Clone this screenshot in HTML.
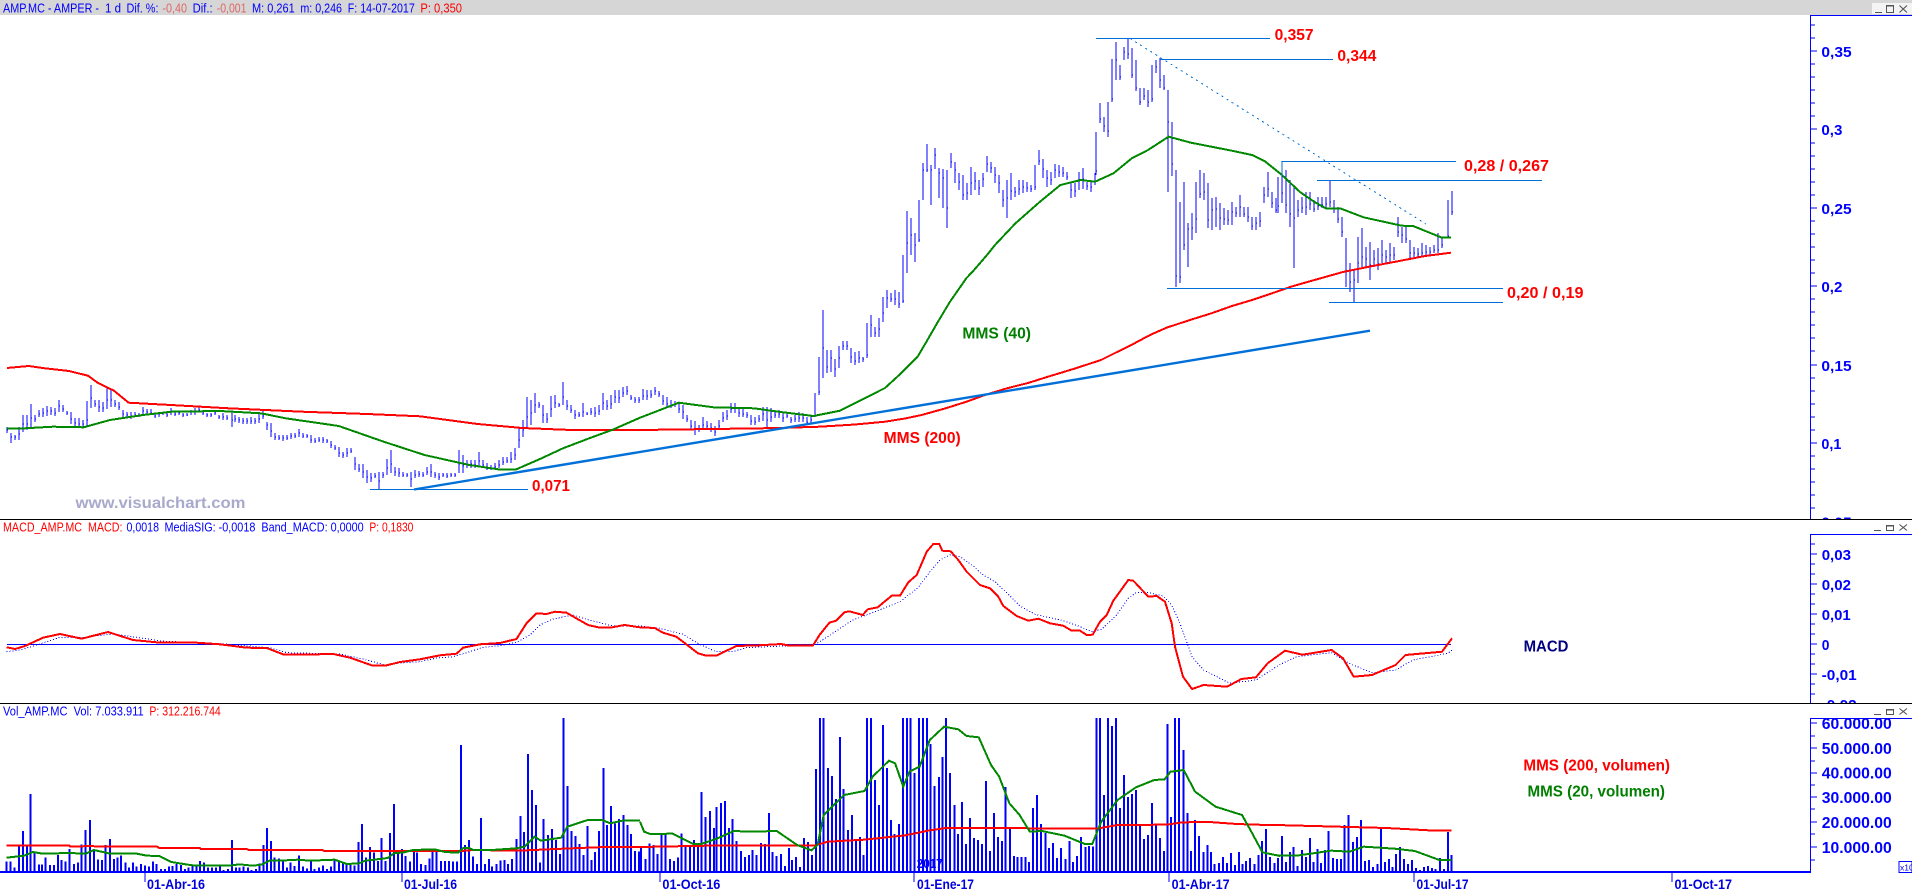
<!DOCTYPE html>
<html lang="es"><head><meta charset="utf-8"><title>AMP.MC - AMPER</title>
<style>
html,body{margin:0;padding:0;background:#fff;width:1912px;height:892px;overflow:hidden}
svg{display:block;position:absolute;left:0;top:0}
text{font-family:"Liberation Sans",Arial,sans-serif}
.t{font-size:13px}
.b{fill:#0000ff}.r{fill:#ff0000}.s{fill:#e06666}
.ax{font-size:15px;font-weight:700;fill:#0000ff}
.d{font-size:13.5px;font-weight:700;fill:#0000e0}
.an{font-size:16px;font-weight:700;fill:#ff0000}
.v *{vector-effect:non-scaling-stroke}
.c{shape-rendering:crispEdges;fill:none}
</style></head><body>
<svg width="1912" height="892" viewBox="0 0 1912 892" xmlns="http://www.w3.org/2000/svg">
<defs>
<clipPath id="p1"><rect x="1800" y="15" width="112" height="504"/></clipPath>
<clipPath id="p2"><rect x="1800" y="534" width="112" height="169"/></clipPath>
</defs>
<rect width="1912" height="892" fill="#fff"/>
<rect width="1912" height="15" fill="#d6d6d6"/>
<rect x="1872" y="3" width="40" height="11" fill="#f4f4f4"/>

<!-- title 1 -->
<g class="t">
<text class="b" x="3" y="12.5" textLength="96" lengthAdjust="spacingAndGlyphs">AMP.MC - AMPER -</text>
<text class="b" x="105" y="12.5" textLength="16" lengthAdjust="spacingAndGlyphs">1 d</text>
<text class="b" x="126.5" y="12.5" textLength="32" lengthAdjust="spacingAndGlyphs">Dif. %:</text>
<text class="s" x="162.4" y="12.5" textLength="24.6" lengthAdjust="spacingAndGlyphs">-0,40</text>
<text class="b" x="192.6" y="12.5" textLength="20" lengthAdjust="spacingAndGlyphs">Dif.:</text>
<text class="s" x="216.7" y="12.5" textLength="29.8" lengthAdjust="spacingAndGlyphs">-0,001</text>
<text class="b" x="252" y="12.5" textLength="42.7" lengthAdjust="spacingAndGlyphs">M: 0,261</text>
<text class="b" x="300.4" y="12.5" textLength="41.6" lengthAdjust="spacingAndGlyphs">m: 0,246</text>
<text class="b" x="347.8" y="12.5" textLength="67" lengthAdjust="spacingAndGlyphs">F: 14-07-2017</text>
<text class="r" x="420.4" y="12.5" textLength="41.6" lengthAdjust="spacingAndGlyphs">P: 0,350</text>
<!-- title 2 -->
<text class="r" x="3" y="531.5" textLength="119.5" lengthAdjust="spacingAndGlyphs" xml:space="preserve">MACD_AMP.MC  MACD:</text>
<text class="b" x="126.5" y="531.5" textLength="32.5" lengthAdjust="spacingAndGlyphs">0,0018</text>
<text class="b" x="164.5" y="531.5" textLength="199.2" lengthAdjust="spacingAndGlyphs" xml:space="preserve">MediaSIG: -0,0018  Band_MACD: 0,0000</text>
<text class="r" x="369.4" y="531.5" textLength="44" lengthAdjust="spacingAndGlyphs">P: 0,1830</text>
<!-- title 3 -->
<text class="b" x="3" y="715.5" textLength="140.7" lengthAdjust="spacingAndGlyphs" xml:space="preserve">Vol_AMP.MC  Vol: 7.033.911</text>
<text class="r" x="149.4" y="715.5" textLength="71.4" lengthAdjust="spacingAndGlyphs">P: 312.216.744</text>
</g>

<!-- separators -->
<rect x="0" y="519" width="1912" height="1" fill="#000"/>
<rect x="0" y="703" width="1912" height="1" fill="#000"/>

<!-- price bars -->
<path class="c" stroke="#0000ff" stroke-width="1" d="M7 427V433m0-3h1M11 433V443m0-6h1M15 435V440m0-3h1M19 427V440m0-6h1M23 415V432m0-8h1M27 415V430m0-6h1M31 404V428m0-10h1M35 415V422m0-3h1M39 410V417m0-3h1M43 408V417m0-4h1M47 406V416m0-5h1M51 407V415m0-4h1M55 408V416m0-3h1M59 400V412m0-6h1M63 405V412m0-3h1M67 411V415m0-2h1M71 412V424m0-5h1M75 418V427m0-4h1M79 418V427m0-3h1M83 420V428m0-4h1M87 401V427m0-7h1M91 385V408m0-10h1M95 400V407m0-3h1M99 400V412m0-5h1M103 402V412m0-4h1M107 388V409m0-9h1M111 390V407m0-7h1M115 400V407m0-3h1M119 402V410m0-3h1M123 410V417m0-3h1M127 412V417m0-2h1M131 412V419m0-3h1M135 412V417m0-2h1M139 413V417m0-2h1M143 407V415m0-4h1M147 409V415m0-3h1M151 409V415m0-2h1M155 413V418m0-2h1M159 412V417m0-3h1M163 412V415m0-2h1M167 413V417m0-2h1M171 408V415m0-3h1M175 412V416m0-2h1M179 412V415m0-2h1M183 413V417m0-2h1M187 413V416m0-1h1M191 410V415m0-3h1M195 408V415m0-3h1M199 407V412m0-2h1M203 410V415m0-2h1M207 413V417m0-2h1M211 413V417m0-2h1M215 410V415m0-2h1M219 415V419m0-2h1M223 413V420m0-3h1M227 415V420m0-2h1M232 411V427m0-7h1M235 415V422m0-3h1M239 417V423m0-3h1M243 418V424m0-3h1M247 418V424m0-3h1M251 417V424m0-3h1M255 418V424m0-3h1M259 413V423m0-4h1M263 411V419m0-3h1M267 422V430m0-5h1M271 423V437m0-6h1M275 433V440m0-3h1M279 435V440m0-2h1M283 435V441m0-3h1M287 435V440m0-2h1M291 433V439m0-3h1M295 433V438m0-2h1M299 429V437m0-4h1M303 433V438m0-2h1M307 434V438m0-2h1M311 435V443m0-3h1M315 438V443m0-2h1M319 437V442m0-2h1M323 437V443m0-3h1M327 439V443m0-2h1M331 441V448m0-3h1M335 445V450m0-2h1M339 447V457m0-4h1M343 452V458m0-3h1M347 448V457m0-4h1M351 448V453m0-2h1M355 457V470m0-6h1M359 464V472m0-3h1M363 464V478m0-6h1M367 470V483m0-6h1M371 473V482m0-4h1M375 473V478m0-2h1M379 472V489m0-8h1M383 472V478m0-3h1M387 459V475m0-7h1M391 450V473m0-9h1M395 467V476m0-4h1M399 468V477m0-4h1M403 472V477m0-2h1M407 473V477m0-2h1M411 472V487m0-8h1M415 470V478m0-3h1M419 471V477m0-3h1M423 472V477m0-2h1M427 467V475m0-3h1M431 464V477m0-5h1M435 472V478m0-3h1M439 473V480m0-3h1M443 473V477m0-2h1M447 473V478m0-2h1M451 473V477m0-2h1M455 473V477m0-2h1M459 450V473m0-9h1M463 455V473m0-7h1M467 460V468m0-3h1M471 460V468m0-4h1M475 460V468m0-3h1M479 452V467m0-6h1M483 460V468m0-3h1M487 463V470m0-3h1M491 465V470m0-2h1M495 463V470m0-3h1M499 460V468m0-3h1M503 457V465m0-3h1M507 457V463m0-2h1M511 452V463m0-4h1M515 448V460m0-5h1M519 428V448m0-8h1M523 420V437m0-7h1M527 397V427m0-10h1M531 400V425m0-12h1M535 393V413m0-8h1M539 402V408m0-3h1M543 405V423m0-8h1M547 413V423m0-4h1M551 396V417m0-8h1M555 395V408m0-5h1M559 403V407m0-2h1M563 382V405m0-8h1M567 400V410m0-4h1M571 405V413m0-3h1M575 410V419m0-4h1M579 412V417m0-2h1M583 403V417m0-5h1M587 412V415m0-1h1M591 408V415m0-3h1M595 407V417m0-4h1M599 405V415m0-4h1M603 393V410m0-7h1M607 400V410m0-4h1M611 395V409m0-5h1M615 390V403m0-6h1M619 390V403m0-5h1M623 387V397m0-4h1M627 386V395m0-4h1M631 395V400m0-2h1M635 397V403m0-3h1M639 397V403m0-3h1M643 389V400m0-4h1M647 390V400m0-4h1M651 390V398m0-3h1M655 387V395m0-4h1M659 391V397m0-3h1M663 395V405m0-4h1M667 397V408m0-4h1M671 400V408m0-3h1M675 401V407m0-3h1M679 403V413m0-4h1M683 405V419m0-7h1M687 415V422m0-3h1M691 420V430m0-4h1M695 421V435m0-6h1M699 425V432m0-3h1M703 417V430m0-5h1M707 421V430m0-4h1M711 423V432m0-4h1M715 426V436m0-4h1M719 420V430m0-4h1M723 412V422m0-4h1M727 410V420m0-4h1M731 403V413m0-4h1M735 403V413m0-5h1M739 407V417m0-4h1M743 408V417m0-3h1M747 412V418m0-3h1M751 415V425m0-4h1M755 417V425m0-3h1M759 415V422m0-3h1M763 407V421m0-7h1M767 407V427m0-7h1M771 408V422m0-5h1M775 412V418m0-3h1M779 410V418m0-4h1M783 412V422m0-4h1M787 412V418m0-2h1M791 417V423m0-3h1M795 415V422m0-3h1M799 412V422m0-4h1M803 413V422m0-4h1M807 417V425m0-3h1M811 415V423m0-3h1M815 393V417m0-2h1M819 357V395m0-3h1M823 310V378m0-30h1M827 350V373m0-6h1M831 350V372m0-14h1M835 359V377m0-8h1M839 346V368m0-10h1M843 341V350m0-4h1M847 341V350m0-4h1M851 348V363m0-6h1M855 352V365m0-4h1M859 351V363m0-5h1M863 357V362m0-3h1M867 323V358m0-3h1M871 315V337m0-12h1M875 327V337m0-4h1M879 318V337m0-8h1M883 297V322m0-9h1M887 290V308m0-10h1M891 293V302m0-3h1M895 290V305m0-6h1M899 292V308m0-4h1M903 255V303m0-2h1M907 211V273m0-30h1M911 218V255m0-20h1M915 233V262m0-17h1M919 200V242m0-2h1M923 163V200m0-30h1M927 144V172m0-2h1M931 165V205m0-35h1M935 148V169m0-14h1M939 168V198m0-25h1M943 169V208m0-30h1M947 170V228m0-20h1M951 153V168m0-6h1M955 162V183m0-13h1M959 173V190m0-8h1M963 175V200m0-5h1M967 183V200m0-7h1M971 167V195m0-12h1M975 172V190m0-9h1M979 180V195m0-7h1M983 173V187m0-8h1M987 156V172m0-8h1M991 162V173m0-5h1M995 167V183m0-8h1M999 175V193m0-10h1M1003 190V207m0-7h1M1007 180V218m0-20h1M1011 173V200m0-9h1M1015 187V197m0-5h1M1019 180V195m0-6h1M1023 180V193m0-6h1M1027 182V192m0-4h1M1031 185V192m0-3h1M1035 165V190m0-3h1M1039 150V165m0-4h1M1043 159V178m0-9h1M1047 170V187m0-9h1M1051 172V185m0-5h1M1055 164V178m0-8h1M1059 165V177m0-5h1M1063 167V177m0-4h1M1067 172V180m0-3h1M1071 182V198m0-8h1M1075 183V197m0-6h1M1079 172V190m0-9h1M1083 168V189m0-10h1M1087 182V190m0-4h1M1091 180V192m0-5h1M1095 173V185m0-4h1M1096 132V175m0-4h1M1100 103V123m0-4h1M1104 117V132m0-6h1M1108 102V137m0-6h1M1112 59V102m0-3h1M1116 42V80m0-20h1M1120 65V80m0-3h1M1124 47V60m0-8h1M1128 39V59m0-5h1M1132 48V78m0-3h1M1136 60V91m0-3h1M1140 88V105m0-3h1M1144 88V100m0-4h1M1148 90V107m0-5h1M1152 65V102m0-3h1M1156 60V73m0-6h1M1160 58V88m0-8h1M1164 75V90m0-2h1M1168 90V192m0-70h1M1172 122V176m0-12h1M1176 170V287m0-11h1M1180 202V283m0-6h1M1184 182V250m0-5h1M1188 223V267m0-38h1M1192 213V240m0-12h1M1196 182V233m0-14h1M1200 170V198m0-4h1M1204 173V200m0-8h1M1208 183V228m0-8h1M1212 198V230m0-20h1M1216 197V227m0-18h1M1220 203V230m0-12h1M1224 208V225m0-6h1M1228 210V225m0-5h1M1232 202V225m0-13h1M1236 207V217m0-4h1M1240 195V217m0-10h1M1244 207V217m0-3h1M1248 207V222m0-5h1M1252 217V230m0-4h1M1256 217V230m0-7h1M1260 212V227m0-6h1M1264 187V203m0-8h1M1268 172V197m0-8h1M1272 192V208m0-5h1M1276 198V213m0-3h1M1278 177V213m0-7h1M1282 161V203m0-10h1M1286 170V213m0-8h1M1290 180V227m0-13h1M1294 187V268m0-50h1M1298 200V217m0-7h1M1302 197V213m0-5h1M1306 192V215m0-8h1M1310 192V210m0-6h1M1314 200V212m0-3h1M1318 197V210m0-4h1M1322 197V208m0-3h1M1326 197V208m0-4h1M1330 180V207m0-5h1M1334 200V213m0-5h1M1338 207V223m0-4h1M1342 217V237m0-5h1M1346 238V287m0-15h1M1350 263V292m0-10h1M1354 270V302m0-22h1M1358 237V283m0-20h1M1362 228V267m0-10h1M1366 247V267m0-8h1M1370 242V280m0-15h1M1374 250V267m0-8h1M1378 248V270m0-6h1M1382 240V263m0-8h1M1386 250V263m0-6h1M1390 243V263m0-8h1M1394 247V260m0-5h1M1398 217V237m0-5h1M1402 227V243m0-8h1M1406 227V243m0-4h1M1410 240V258m0-5h1M1414 247V257m0-4h1M1418 248V257m0-3h1M1422 243V257m0-4h1M1426 245V255m0-3h1M1430 247V255m0-3h1M1434 245V253m0-3h1M1438 233V253m0-3h1M1442 238V248m0-3h1M1448 200V238m0-2h1M1452 191V215m0-3h1"/>

<!-- price MAs -->
<polyline class="c" stroke="#ff0000" stroke-width="2" stroke-linejoin="round" points="7,368 28.6,366 45,368.3 69,371 88,375.7 98,383 114,390.7 128.6,402.7 171,405 228.6,408.3 302,411.7 367,414 420,416.3 477.6,424 522.4,428 571.4,430 640,430 734,428.7 780,428 819.6,426.7 855,424.5 885,421.7 905,418.5 921.6,415 945,408.5 966.5,401.7 985,395 1007,388.3 1028,383 1048,376.7 1075,368.5 1101,360 1116,352.5 1130,345.7 1150,335 1166.5,327.7 1190,320 1211.4,313.3 1232,306 1252,300 1270,294 1291,286.7 1318,279 1343,272 1370,266.5 1395.6,261.7 1425,256 1451,252.7"/>
<polyline class="c" stroke="#008800" stroke-width="2" stroke-linejoin="round" points="7,428.3 24.5,428.3 53,426.7 83.7,427.3 110,420 143,415 171.4,411.7 220,411 261,413.3 285.7,418.3 338.8,426 383.7,441.7 424.5,455 469.4,465 498,469.3 516.3,469.3 540,459 563,448.3 590,438 612,430 640,417.7 660,410 678.8,402.7 713.5,407.3 754,408.3 783,412.3 813.5,416 840,410.7 864.5,398.3 885,388 901,373.3 917.6,356.7 925.7,343 938,321.7 950,301.7 966.5,278 972.6,271.7 987,255 995,245 1015.5,223.3 1040,201.7 1060.4,185 1080.8,180 1095,181.7 1113.5,173.3 1131.8,158.3 1148,150 1168.6,136.7 1191,142.7 1231.8,150.7 1252,155 1264.5,161 1282,175 1300,192 1314,201.7 1325.8,208.3 1340,208.3 1363.6,217.3 1401.4,225.7 1413,226 1442,237.7 1451,237.7"/>

<!-- trend + annotations -->
<path d="M414 489.5L1370 330.7" stroke="#0070d8" stroke-width="2.4" fill="none"/>
<path class="c" d="M1130 38.5L1426 224" stroke="#0070d8" stroke-width="1" stroke-dasharray="2 4"/>
<path class="c" stroke="#0070d8" stroke-width="1" d="M1096 38.5H1270M1160 59.5H1333M1282 161.5H1456M1282 161.5V176M1317 180.5H1542M1167 288.5H1503M1329 302.5H1503M370 489.5H528"/>
<g class="an">
<text x="1274.6" y="40" textLength="39" lengthAdjust="spacingAndGlyphs">0,357</text>
<text x="1337.4" y="61" textLength="39" lengthAdjust="spacingAndGlyphs">0,344</text>
<text x="1464" y="171" textLength="85" lengthAdjust="spacingAndGlyphs">0,28 / 0,267</text>
<text x="1507" y="298" textLength="76.5" lengthAdjust="spacingAndGlyphs">0,20 / 0,19</text>
<text x="532" y="491" textLength="38" lengthAdjust="spacingAndGlyphs">0,071</text>
<text x="883.7" y="443" textLength="77" lengthAdjust="spacingAndGlyphs" font-size="15.5" style="font-size:15.5px">MMS (200)</text>
<text x="962.4" y="338.5" textLength="68.6" lengthAdjust="spacingAndGlyphs" style="font-size:15.5px;fill:#007f00">MMS (40)</text>
<text x="1523.6" y="651.5" textLength="44.8" lengthAdjust="spacingAndGlyphs" style="font-size:15.5px;fill:#000080">MACD</text>
<text x="1523.4" y="770.5" textLength="146.6" lengthAdjust="spacingAndGlyphs" style="font-size:15.5px">MMS (200, volumen)</text>
<text x="1527.5" y="796.5" textLength="137.5" lengthAdjust="spacingAndGlyphs" style="font-size:15.5px;fill:#007f00">MMS (20, volumen)</text>
<text x="75.5" y="508" textLength="170" lengthAdjust="spacingAndGlyphs" style="font-size:15.5px;fill:#a8a9cc">www.visualchart.com</text>
</g>

<!-- MACD -->
<path class="c" stroke="#0000ff" stroke-width="1" d="M7 644.5H1451"/>
<polyline class="c" stroke="#0000ff" stroke-width="1" stroke-dasharray="1 2" points="6.7,651.7 20,650 36.7,645 60,637.3 80,637.7 113.3,634 136.7,637.3 160,641 220,643.7 270,647.7 286.7,652.7 340,654 366.7,660 385,665 400,663 420,661.7 436.6,658 453,656.7 470,651.7 483,647.3 500,645.7 516.5,642.3 530,635 540,625 553,619 573,615 590,620.3 613,626 639.7,626 659.7,628.3 683,634.3 699.6,644.3 716.2,651.7 733,651.7 746,647.7 776,646.3 814.5,645 832.8,633.3 852.7,620 872.7,612.7 900,601.7 918.3,587.3 930,571.7 940,560 950,555 960,556.7 973.3,566 981.7,574 995,581.7 1010,596 1020,606 1035,614.3 1063.3,620.7 1080,626.7 1091.7,631.7 1101.7,629.3 1116.7,615 1128.3,598.3 1136.7,592.3 1146.7,592.3 1163.3,596 1171.7,605 1179.3,621.7 1192,656.7 1203.6,670 1229.8,683.3 1256,680 1279,665 1296.7,656.7 1331.6,652.7 1349,663.3 1372,672.7 1395.6,670 1413,660 1448,653.3 1452,650"/>
<polyline class="c" stroke="#ff0000" stroke-width="2" stroke-linejoin="round" points="6.7,647.3 15,649 25,646 43,637.7 60,634 81.7,638.7 108,632 133,640 156.7,642.3 196.7,642.7 220,644.3 246.7,647.7 266.7,648 283,654.3 316.7,654.3 333.3,654 350,657.7 371.7,665.3 385,665.7 400,662 420,659.3 440,655.3 456.6,653.7 463,647.7 480,644.3 500,643 516.5,639 526.5,623.3 536.5,613.3 546.5,614 555,611.7 566.5,612.7 588,625 600,627.7 610,627.7 624.7,625 639.7,627.3 654.7,628 663,632.7 676.3,636.7 686.3,644.3 698,653.3 706.3,655.7 716.3,655.7 736.2,646 759.5,645.3 781,644 789.5,645.7 812.8,645.7 819.5,635 829.4,622.7 836,620.7 844.4,612.3 849.4,611.3 862.7,615 867.7,609.3 877.7,607.3 891.7,595.7 900,595.7 908.3,582.3 916.7,575 926.7,551.7 933.3,544 939.3,544 942.3,550.7 950.7,551.3 958.3,560 966.7,571.7 980,585 990,588.3 998.3,596.7 1003.3,606 1016.7,616 1028.3,620.7 1038.3,618.7 1050,623.3 1063.3,625.7 1071.7,630.7 1080,630.7 1086.7,635 1092.7,634.7 1100,621.7 1106.7,615 1113.3,600.7 1128.3,580 1133.3,580.7 1148.3,596.7 1156.7,596 1165,601.7 1171.7,623.3 1175,646.7 1183,676.7 1192,689 1203.6,685 1227,686.7 1241.4,679 1256,677.3 1267.6,663.3 1285,650.7 1302.5,654.7 1331.6,650 1343,658.3 1353.7,676.7 1372,675 1395.6,665 1405.5,655 1442,651.7 1452,638.3"/>

<!-- volume -->
<g class="v">
<g transform="translate(0,690) scale(.40816,.33333)">
<path class="c" stroke="#0000ff" stroke-width="2" d="M16 515V547M26 515V547M36 533V547M46 463V547M56 423V547M66 463V547M75 312V547M85 485V547M95 523V547M103 523V547M112 503V547M122 525V547M132 525V547M142 495V547M151 510V547M161 515V547M170 477V547M181 522V547M191 518V547M200 463V547M210 420V547M220 390V547M230 480V547M240 508V547M250 510V547M259 465V547M269 447V547M279 507V547M288 503V547M297 497V547M307 518V547M316 533V547M326 518V547M335 530V547M345 522V547M355 527V547M365 530V547M375 515V547M384 522V547M394 537V547M404 537V547M414 530V547M423 528V547M433 522V547M443 525V547M453 537V547M462 533V547M472 527V547M481 525V547M490 513V547M500 518V547M510 533V547M519 533V547M529 533V547M539 530V547M548 540V547M558 537V547M568 450V547M578 533V547M587 533V547M597 530V547M607 533V547M616 540V547M627 537V547M636 520V547M646 465V547M654 414V547M664 453V547M673 503V547M683 505V547M693 515V547M703 533V547M712 518V547M722 528V547M732 497V547M742 530V547M752 535V547M762 515V547M771 537V547M781 533V547M791 527V547M801 537V547M811 530V547M820 507V547M830 513V547M840 520V547M849 523V547M859 525V547M868 527V547M878 456V547M887 402V547M897 502V547M906 471V547M916 488V547M926 513V547M935 444V547M945 513V547M955 429V547M965 342V547M975 487V547M985 477V547M994 498V547M1004 515V547M1014 480V547M1022 488V547M1032 522V547M1042 525V547M1052 505V547M1060 480V547M1070 480V547M1080 513V547M1090 513V547M1100 513V547M1110 515V547M1120 515V547M1129 165V547M1139 465V547M1149 450V547M1159 500V547M1169 522V547M1179 384V547M1188 522V547M1198 507V547M1206 530V547M1216 522V547M1226 512V547M1236 510V547M1245 522V547M1255 507V547M1265 447V547M1275 378V547M1284 426V547M1293 192V547M1303 300V547M1313 345V547M1323 518V547M1332 387V547M1342 435V547M1352 417V547M1362 450V547M1372 492V547M1381 84V547M1390 288V547M1400 423V547M1410 438V547M1420 462V547M1429 495V547M1439 408V547M1449 510V547M1458 486V547M1468 423V547M1478 234V547M1487 405V547M1497 348V547M1507 400V547M1517 387V547M1527 375V547M1537 405V547M1546 432V547M1556 483V547M1566 485V547"/>
</g>
<g transform="translate(640,690) scale(.40816,.33333)">
<path class="c" stroke="#0000ff" stroke-width="2" d="M3 470V547M13 507V547M23 460V547M33 465V547M43 492V547M53 432V547M63 432V547M73 507V547M83 513V547M93 502V547M102 430V547M112 465V547M122 468V547M132 450V547M142 470V547M151 306V547M161 381V547M171 363V547M181 414V547M188 351V547M198 339V547M208 333V547M218 414V547M227 387V547M237 453V547M247 483V547M257 501V547M267 495V547M276 480V547M286 495V547M296 459V547M306 462V547M316 369V547M325 486V547M335 498V547M345 492V547M355 528V547M365 474V547M373 510V547M382 501V547M392 531V547M402 444V547M411 456V547M421 495V547M431 237V547M441 84V547M450 84V547M460 234V547M470 258V547M480 327V547M490 141V547M499 297V547M509 420V547M519 375V547M529 450V547M539 441V547M548 495V547M556 84V547M566 84V547M576 270V547M586 345V547M595 105V547M605 234V547M615 390V547M624 432V547M634 402V547M644 84V547M654 84V547M663 84V547M673 249V547M683 84V547M693 84V547M703 84V547M712 162V547M722 288V547M732 261V547M741 201V547M750 84V547M760 249V547M770 345V547M779 432V547M789 336V547M799 462V547M808 384V547M818 444V547M828 450V547M838 462V547M848 273V547M857 483V547M867 369V547M877 441V547M887 453V547M896 291V547M906 417V547M916 498V547M925 501V547M935 501V547M944 501V547M953 516V547M963 354V547M973 315V547M983 402V547M993 429V547M1002 474V547M1012 459V547M1022 504V547M1032 474V547M1042 507V547M1052 453V547M1061 516V547M1071 498V547M1081 441V547M1091 471V547M1100 468V547M1110 470V547M1118 84V547M1127 84V547M1137 315V547M1146 84V547M1156 108V547M1166 84V547M1176 354V547M1186 255V547M1195 321V547M1205 312V547M1215 300V547M1225 408V547M1235 447V547M1245 435V547M1254 339V547M1264 405V547M1274 444V547M1284 483V547M1292 102V547M1301 381V547M1311 84V547M1321 84V547M1331 180V547M1341 369V547M1350 483V547M1360 390V547M1370 438V547M1380 486V547M1390 465V547M1399 486V547M1408 522V547M1418 519V547M1428 501V547M1438 519V547M1448 489V547M1458 525V547M1467 486V547M1476 522V547M1485 513V547M1495 504V547M1505 522V547M1515 495V547M1524 453V547M1534 417V547M1544 501V547M1554 519V547M1563 504V547"/>
</g>
<g transform="translate(1272,690) scale(.40816,.33333)">
<path class="c" stroke="#0000ff" stroke-width="2" d="M24 438V547M34 516V547M44 486V547M53 471V547M63 528V547M73 480V547M83 501V547M93 444V547M102 516V547M111 477V547M120 519V547M130 480V547M139 423V547M149 504V547M159 507V547M169 507V547M178 405V547M188 375V547M198 456V547M208 441V547M218 390V547M228 513V547M238 510V547M248 531V547M258 522V547M267 414V547M277 516V547M287 507V547M295 531V547M304 492V547M314 471V547M324 507V547M333 522V547M343 510V547M353 534V547M363 540V547M373 531V547M382 528V547M392 534V547M401 537V547M411 504V547M421 537V547M431 426V547M440 495V547"/>
</g>
<!-- volume MAs -->
<g transform="translate(0,690) scale(.40816,.33333)">
<polyline class="c" stroke="#ff0000" stroke-width="2" points="16,467 170,467 172,470 225,468 240,470 385,470 390,474 490,474 492,477 605,477 610,480 790,480 795,483 1130,483 1160,480 1270,482 1380,476 1480,471 1568,471"/>
<polyline class="c" stroke="#008800" stroke-width="2" points="16,503 60,497 80,486 105,491 170,489 210,491 230,480 270,491 335,491 360,497 390,498 420,516 460,524 480,527 565,527 585,523 620,527 640,524 660,512 700,511 730,509 760,512 820,509 850,522 880,520 895,512 950,504 965,490 990,487 1012,480 1065,478 1090,486 1122,488 1135,474 1150,474 1160,480 1205,480 1265,475 1285,470 1310,440 1325,452 1375,443 1390,410 1440,390 1475,390 1495,400 1525,392 1568,392"/>
</g>
<g transform="translate(640,690) scale(.40816,.33333)">
<polyline class="c" stroke="#ff0000" stroke-width="2" points="0,471 210,466 430,466 460,455 550,449 650,436 710,421 750,414 1010,415 1120,416 1170,405 1290,404 1330,397 1395,396 1450,401 1500,404 1568,405"/>
<polyline class="c" stroke="#008800" stroke-width="2" points="0,395 10,425 25,432 80,431 130,462 150,462 190,445 230,423 270,425 335,423 385,465 420,481 435,465 450,375 500,315 550,303 570,260 610,212 625,220 645,290 660,245 685,230 710,150 745,110 780,118 800,138 830,142 860,225 880,260 905,340 930,375 955,425 985,423 1040,437 1090,462 1108,462 1130,395 1170,330 1215,292 1260,270 1285,268 1300,245 1332,240 1360,305 1410,350 1475,375 1500,430 1525,487 1568,498"/>
</g>
<g transform="translate(1272,690) scale(.40816,.33333)">
<polyline class="c" stroke="#ff0000" stroke-width="2" points="8,405 100,408 280,414 400,422 440,422"/>
<polyline class="c" stroke="#008800" stroke-width="2" points="8,495 20,497 60,497 100,490 145,482 190,485 225,470 300,476 350,483 410,510 440,510"/>
</g>
</g>
<text x="916.7" y="868" font-size="13" font-weight="700" fill="#0000ff" textLength="26" lengthAdjust="spacingAndGlyphs">2017</text>

<!-- baseline and date ticks -->
<rect x="0" y="871" width="1811" height="2" fill="#0000ff"/>
<path class="c" stroke="#0000ff" stroke-width="1" d="M145 872V882M402 872V882M660 872V882M914 872V882M1169 872V882M1414 872V882M1672 872V882"/>
<g class="d">
<text x="147" y="889" textLength="58" lengthAdjust="spacingAndGlyphs">01-Abr-16</text>
<text x="404" y="889" textLength="53" lengthAdjust="spacingAndGlyphs">01-Jul-16</text>
<text x="662.4" y="889" textLength="58" lengthAdjust="spacingAndGlyphs">01-Oct-16</text>
<text x="917" y="889" textLength="57" lengthAdjust="spacingAndGlyphs">01-Ene-17</text>
<text x="1171.6" y="889" textLength="58" lengthAdjust="spacingAndGlyphs">01-Abr-17</text>
<text x="1416.5" y="889" textLength="52" lengthAdjust="spacingAndGlyphs">01-Jul-17</text>
<text x="1674.5" y="889" textLength="57.5" lengthAdjust="spacingAndGlyphs">01-Oct-17</text>
</g>

<!-- axes -->
<path class="c" stroke="#0000ff" stroke-width="1" d="M1810.5 15V519M1810 15.5H1912M1810.5 534V703M1810 534.5H1912M1810.5 718V872M1810 718.5H1912
M1811 25h4M1811 38h4M1811 51h6M1811 64h4M1811 77h4M1811 90h4M1811 103h4M1811 116h4M1811 129h6M1811 143h4M1811 156h4M1811 169h4M1811 182h4M1811 195h4M1811 208h6M1811 221h4M1811 234h4M1811 247h4M1811 260h4M1811 273h4M1811 286h6M1811 299h4M1811 312h4M1811 325h4M1811 338h4M1811 351h4M1811 365h6M1811 378h4M1811 391h4M1811 404h4M1811 417h4M1811 430h4M1811 443h6M1811 456h4M1811 469h4M1811 482h4M1811 495h4M1811 508h4
M1811 544h4M1811 554h6M1811 564h4M1811 574h4M1811 584h6M1811 594h4M1811 604h4M1811 614h6M1811 624h4M1811 634h4M1811 644h6M1811 654h4M1811 664h4M1811 674h6M1811 684h4M1811 694h4
M1811 723h6M1811 736h4M1811 748h6M1811 761h4M1811 773h6M1811 785h4M1811 797h6M1811 809h4M1811 822h6M1811 834h4M1811 847h6M1811 860h4"/>
<g class="ax" clip-path="url(#p1)">
<text x="1821.4" y="57" textLength="30.2" lengthAdjust="spacingAndGlyphs">0,35</text>
<text x="1821.4" y="135" textLength="21" lengthAdjust="spacingAndGlyphs">0,3</text>
<text x="1821.4" y="214" textLength="30.2" lengthAdjust="spacingAndGlyphs">0,25</text>
<text x="1821.4" y="292" textLength="21" lengthAdjust="spacingAndGlyphs">0,2</text>
<text x="1821.4" y="371" textLength="30.2" lengthAdjust="spacingAndGlyphs">0,15</text>
<text x="1821.4" y="449" textLength="20" lengthAdjust="spacingAndGlyphs">0,1</text>
<text x="1821.4" y="527.5" textLength="30.2" lengthAdjust="spacingAndGlyphs">0,05</text>
</g>
<g class="ax" clip-path="url(#p2)">
<text x="1821.7" y="560" textLength="29.3" lengthAdjust="spacingAndGlyphs">0,03</text>
<text x="1821.7" y="590" textLength="29.3" lengthAdjust="spacingAndGlyphs">0,02</text>
<text x="1821.7" y="620" textLength="29" lengthAdjust="spacingAndGlyphs">0,01</text>
<text x="1821.7" y="650" textLength="7.7" lengthAdjust="spacingAndGlyphs">0</text>
<text x="1821.7" y="680" textLength="35" lengthAdjust="spacingAndGlyphs">-0,01</text>
<text x="1821.7" y="710" textLength="35" lengthAdjust="spacingAndGlyphs">-0,02</text>
</g>
<g class="ax" style="font-size:15.5px">
<text x="1821.8" y="729" textLength="70" lengthAdjust="spacingAndGlyphs">60.000.00</text>
<text x="1821.8" y="754" textLength="70" lengthAdjust="spacingAndGlyphs">50.000.00</text>
<text x="1821.8" y="778.5" textLength="70" lengthAdjust="spacingAndGlyphs">40.000.00</text>
<text x="1821.8" y="803" textLength="70" lengthAdjust="spacingAndGlyphs">30.000.00</text>
<text x="1821.8" y="828" textLength="70" lengthAdjust="spacingAndGlyphs">20.000.00</text>
<text x="1821.8" y="853" textLength="70" lengthAdjust="spacingAndGlyphs">10.000.00</text>
</g>
<rect x="1899" y="861.5" width="13" height="11" fill="#fff" stroke="#0000ff" stroke-width="1"/>
<text x="1900" y="870.5" font-size="8.5" fill="#0000ff">x10</text>

<!-- window buttons -->
<g fill="none" stroke="#555" stroke-width="1" shape-rendering="crispEdges">
<path d="M1875 12.5H1882"/><rect x="1886.5" y="5.5" width="7" height="7"/><path d="M1886 6H1894"/>
<path d="M1874 530.5H1881"/><rect x="1886.5" y="525.5" width="7" height="5"/><path d="M1886 526H1894"/>
<path d="M1874 714.5H1881"/><rect x="1886.5" y="709.5" width="7" height="5"/><path d="M1886 710H1894"/>
</g>
<g fill="none" stroke="#555" stroke-width="1.1">
<path d="M1899.5 5.5L1907 12.5M1907 5.5L1899.5 12.5"/>
<path d="M1899.5 524.5L1907 530.5M1907 524.5L1899.5 530.5"/>
<path d="M1899.5 708.5L1907 714.5M1907 708.5L1899.5 714.5"/>
</g>
</svg>
</body></html>
